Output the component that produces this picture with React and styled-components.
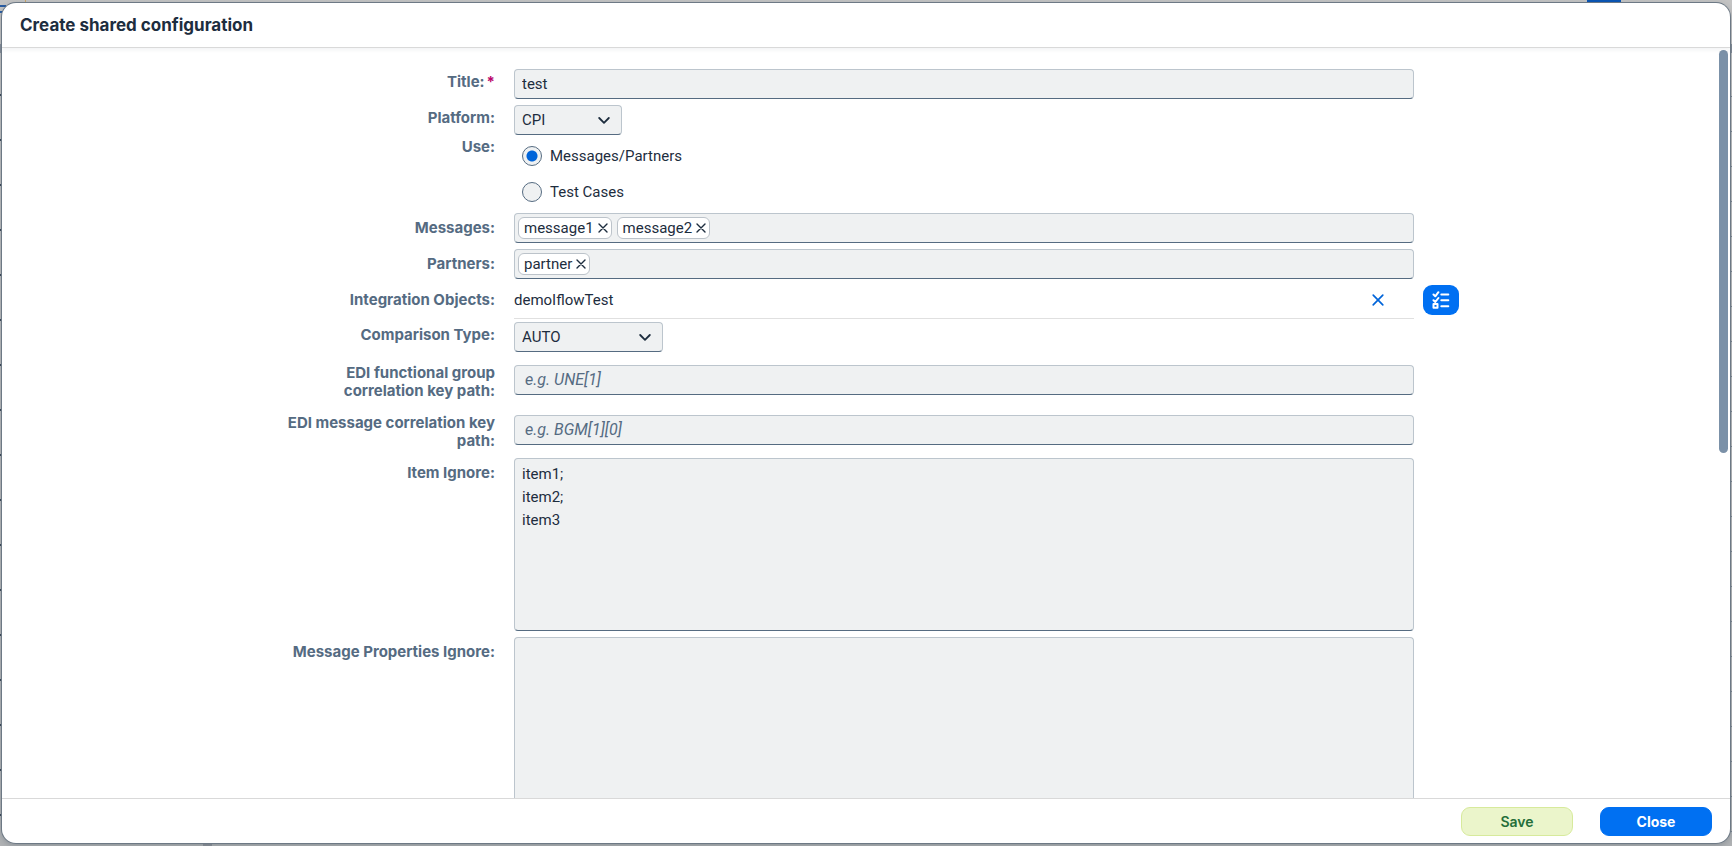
import React, { useState } from 'react';
import styled, { createGlobalStyle, css } from 'styled-components';

const GlobalStyle = createGlobalStyle`
  *, *::before, *::after {
    box-sizing: border-box;
  }

  body {
    margin: 0;
    font-family: Roboto, 'Open Sans', sans-serif;
    font-size: 15px;
    color: #1d2d3e;
  }

  button, input, select, textarea {
    font: inherit;
    color: inherit;
    margin: 0;
  }
`;

const Backdrop = styled.div`
  height: 100vh;
  padding: 3px 2px;
  overflow: hidden;
  background:
    linear-gradient(#0a55b5, #0a55b5) calc(100% - 111px) 0 / 34px 3px no-repeat,
    linear-gradient(#2a5da3, #2a5da3) 0 5px / 6px 2px no-repeat,
    linear-gradient(#2a5da3, #2a5da3) 0 11px / 3px 2px no-repeat,
    linear-gradient(#c9a468, #c9a468) 25px 0 / 1px 3px no-repeat,
    linear-gradient(#858d98, #858d98) 0 44px / 100% 9px no-repeat,
    linear-gradient(#8e9299, #8e9299) 203px 100% / 9px 3px no-repeat,
    repeating-linear-gradient(transparent 0 4px, #3c4a59 4px 6px, transparent 6px 45px) 0 90px / 2px 100% no-repeat,
    repeating-linear-gradient(transparent 0 34px, #7c8793 34px 35px) 100% 62px / 2px 100% no-repeat,
    linear-gradient(#c3c3c3, #b0b2b4);
`;

const Dialog = styled.section`
  display: flex;
  flex-direction: column;
  height: 100%;
  overflow: hidden;
  background: #fff;
  border-radius: 14px;
  box-shadow: 0 0 0 1px #6d7985, 0 2px 6px rgba(34, 53, 72, 0.3);
`;

const Header = styled.header`
  position: relative;
  display: flex;
  align-items: center;
  flex: none;
  height: 45px;
  padding: 0 18px;
  border-bottom: 1px solid #d9d9d9;
  box-shadow: 0 2px 4px rgba(34, 53, 72, 0.06);
`;

const DialogTitle = styled.h1`
  margin: 0;
  font-family: Inter, sans-serif;
  font-size: 17px;
  font-weight: 700;
  line-height: 24px;
`;

const Body = styled.div`
  display: flex;
  flex: 1;
  min-height: 0;
`;

const Form = styled.form`
  flex: 1;
  min-width: 0;
  overflow: hidden;
  padding-top: 18px;
`;

const ScrollTrack = styled.div`
  flex: none;
  width: 11px;
  padding: 2px 2px 2px 0;
`;

const ScrollThumb = styled.div`
  height: 54%;
  border-radius: 5px;
  background: #7b91a8;
`;

const Row = styled.div`
  display: grid;
  grid-template-columns: 512fr 900fr 305fr;
  min-height: ${(p) => (p.$tall ? '50px' : '36px')};
`;

const labelTops = { flush: '0', form: '7px', middle: '9px' };

const LabelCell = styled.div`
  display: flex;
  justify-content: flex-end;
  align-items: flex-start;
  padding: ${(p) => labelTops[p.$top || 'middle']} 19px 0 0;
`;

const Label = styled.label`
  max-width: 224px;
  font-family: Inter, sans-serif;
  font-weight: 700;
  line-height: 18px;
  text-align: right;
  color: #556b82;
`;

const Required = styled.span`
  margin-left: 2px;
  color: #ba066c;
`;

const Field = styled.div`
  display: flex;
  align-items: center;
  padding: 3px 0;
`;

const control = css`
  border: 1px solid #bcc5cd;
  border-bottom-color: #556b81;
  border-radius: 4px;
  background: #eff1f2;
  outline: none;
`;

const TextInput = styled.input`
  ${control}
  width: 100%;
  height: 30px;
  padding: 0 ${(p) => (p.placeholder ? '10px' : '7px')};

  &::placeholder {
    font-size: 16px;
    font-style: italic;
    color: #556b82;
    opacity: 1;
  }
`;

const TextArea = styled.textarea`
  ${control}
  display: block;
  width: 100%;
  height: 173px;
  padding: 4px 7px;
  line-height: 23px;
  resize: none;
`;

const SelectBox = styled.div`
  position: relative;
  width: ${(p) => p.$width};
`;

const NativeSelect = styled.select`
  ${control}
  display: block;
  appearance: none;
  width: 100%;
  height: 30px;
  padding: 0 32px 0 7px;
`;

const Chevron = styled.svg`
  position: absolute;
  top: 11px;
  right: 12px;
  pointer-events: none;
`;

const RadioGroup = styled.div`
  display: flex;
  flex-direction: column;
`;

const RadioLabel = styled.label`
  display: flex;
  align-items: center;
  gap: 8px;
  height: 36px;
  padding-left: 8px;
`;

const Radio = styled.input`
  appearance: none;
  width: 20px;
  height: 20px;
  border: 1px solid #556b81;
  border-radius: 50%;
  background: #eff1f2;

  &:checked {
    background: radial-gradient(circle, #0064d9 0 5px, #eff1f2 6px);
  }
`;

const TokenBox = styled.div`
  ${control}
  display: flex;
  align-items: center;
  gap: 5px;
  width: 100%;
  height: 30px;
  padding: 0 3px;
`;

const TokenInput = styled.input`
  flex: 1;
  min-width: 0;
  height: 26px;
  padding: 0;
  border: 0;
  outline: none;
  background: transparent;
`;

const Token = styled.span`
  display: inline-flex;
  align-items: center;
  gap: 4px;
  height: 22px;
  padding: 0 3px 0 5px;
  border: 1px solid #bcc3ca;
  border-radius: 6px;
  background: #fff;
`;

const IconButton = styled.button`
  display: inline-flex;
  align-items: center;
  justify-content: center;
  padding: 0;
  border: 0;
  background: transparent;
  color: ${(p) => p.$color || 'inherit'};
`;

const ObjectValue = styled.div`
  display: flex;
  align-items: center;
  justify-content: space-between;
  height: 37px;
  padding-right: 30px;
  border-bottom: 1px solid #e0e0e0;
`;

const PickerCell = styled.div`
  padding: 3px 9px;
`;

const PickerButton = styled(IconButton)`
  width: 36px;
  height: 30px;
  border-radius: 9px;
  background: #0070f2;
`;

const Footer = styled.footer`
  display: flex;
  align-items: center;
  justify-content: flex-end;
  flex: none;
  gap: 27px;
  height: 45px;
  padding: 0 18px;
  border-top: 1px solid #d9d9d9;
`;

const FooterButton = styled.button`
  width: 112px;
  height: 29px;
  padding: 0;
  border: 1px solid ${(p) => (p.$accept ? '#d7ea9c' : '#0070f2')};
  border-radius: 9px;
  background: ${(p) => (p.$accept ? '#ebf5cb' : '#0070f2')};
  font-family: Inter, sans-serif;
  font-size: 14px;
  font-weight: ${(p) => (p.$accept ? 600 : 700)};
  color: ${(p) => (p.$accept ? '#256f3a' : '#fff')};
`;

const CrossIcon = ({ size = 10 }) => (
  <svg width={size} height={size} viewBox="0 0 10 10" fill="none" stroke="currentColor" strokeWidth="1.4" strokeLinecap="round">
    <path d="M1 1l8 8M9 1L1 9" />
  </svg>
);

const MultiSelectIcon = () => (
  <svg width="18" height="18" viewBox="0 0 18 18" fill="none" stroke="currentColor" strokeWidth="2" strokeLinecap="round">
    <path d="M1.5 3.5l1.8 1.8L6.4 1.2M1.5 9.2l1.8 1.8L6.4 7" strokeLinejoin="round" />
    <path d="M9.3 3.5h7M9.3 9.2h7M9.3 15.2h7" />
    <path d="M1.5 13h4v3.8h-4z" strokeLinejoin="round" />
  </svg>
);

const Select = ({ id, width, options }) => (
  <SelectBox $width={width}>
    <NativeSelect id={id}>
      {options.map((option) => (
        <option key={option}>{option}</option>
      ))}
    </NativeSelect>
    <Chevron width="12" height="9" viewBox="0 0 12 9" fill="none" stroke="#1d2d3e" strokeWidth="1.8" strokeLinecap="round" strokeLinejoin="round">
      <path d="M1.2 2L6 6.8 10.8 2" />
    </Chevron>
  </SelectBox>
);

const TokenField = ({ id, initial }) => {
  const [tokens, setTokens] = useState(initial);

  return (
    <TokenBox>
      {tokens.map((token) => (
        <Token key={token}>
          {token}
          <IconButton
            type="button"
            aria-label={`Remove ${token}`}
            onClick={() => setTokens(tokens.filter((t) => t !== token))}
          >
            <CrossIcon />
          </IconButton>
        </Token>
      ))}
      <TokenInput id={id} />
    </TokenBox>
  );
};

const FormRow = ({ label, id, top, tall, required, children }) => (
  <Row $tall={tall}>
    <LabelCell $top={top}>
      <Label htmlFor={id}>
        {label}:{required && <Required>*</Required>}
      </Label>
    </LabelCell>
    <Field>{children}</Field>
  </Row>
);

const App = () => {
  const [use, setUse] = useState('Messages/Partners');
  const [object, setObject] = useState('demoIflowTest');

  return (
    <>
      <GlobalStyle />
      <Backdrop>
        <Dialog role="dialog" aria-labelledby="dialog-title">
          <Header>
            <DialogTitle id="dialog-title">Create shared configuration</DialogTitle>
          </Header>
          <Body>
            <Form id="config-form" onSubmit={(e) => e.preventDefault()}>
              <FormRow label="Title" id="title" top="form" required>
                <TextInput id="title" defaultValue="test" required />
              </FormRow>
              <FormRow label="Platform" id="platform" top="form">
                <Select id="platform" width="108px" options={['CPI']} />
              </FormRow>
              <Row>
                <LabelCell $top="flush">
                  <Label as="span" id="use-label">Use:</Label>
                </LabelCell>
                <RadioGroup role="radiogroup" aria-labelledby="use-label">
                  {['Messages/Partners', 'Test Cases'].map((option) => (
                    <RadioLabel key={option}>
                      <Radio type="radio" name="use" checked={use === option} onChange={() => setUse(option)} />
                      {option}
                    </RadioLabel>
                  ))}
                </RadioGroup>
              </Row>
              <FormRow label="Messages" id="messages">
                <TokenField id="messages" initial={['message1', 'message2']} />
              </FormRow>
              <FormRow label="Partners" id="partners">
                <TokenField id="partners" initial={['partner']} />
              </FormRow>
              <Row>
                <LabelCell>
                  <Label as="span">Integration Objects:</Label>
                </LabelCell>
                <ObjectValue>
                  {object}
                  <IconButton type="button" aria-label="Remove object" $color="#0064d9" onClick={() => setObject('')}>
                    <CrossIcon size={12} />
                  </IconButton>
                </ObjectValue>
                <PickerCell>
                  <PickerButton type="button" aria-label="Select objects" $color="#fff">
                    <MultiSelectIcon />
                  </PickerButton>
                </PickerCell>
              </Row>
              <FormRow label="Comparison Type" id="comparison" top="form">
                <Select id="comparison" width="149px" options={['AUTO']} />
              </FormRow>
              <FormRow label="EDI functional group correlation key path" id="edi-group" tall>
                <TextInput id="edi-group" placeholder="e.g. UNE[1]" />
              </FormRow>
              <FormRow label="EDI message correlation key path" id="edi-message" tall>
                <TextInput id="edi-message" placeholder="e.g. BGM[1][0]" />
              </FormRow>
              <FormRow label="Item Ignore" id="item-ignore">
                <TextArea id="item-ignore" defaultValue={'item1;\nitem2;\nitem3'} />
              </FormRow>
              <FormRow label="Message Properties Ignore" id="properties-ignore">
                <TextArea id="properties-ignore" />
              </FormRow>
            </Form>
            <ScrollTrack>
              <ScrollThumb />
            </ScrollTrack>
          </Body>
          <Footer>
            <FooterButton type="submit" form="config-form" $accept>Save</FooterButton>
            <FooterButton type="button">Close</FooterButton>
          </Footer>
        </Dialog>
      </Backdrop>
    </>
  );
};

export default App;
